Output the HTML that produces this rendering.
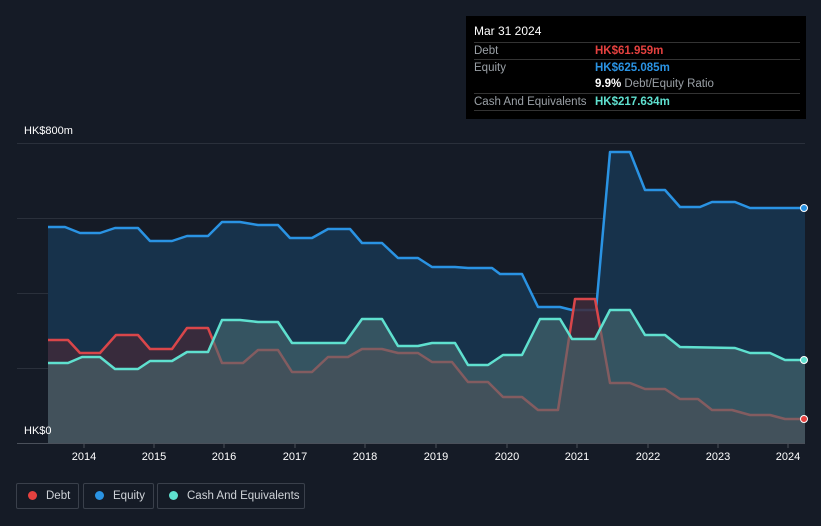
<!DOCTYPE html>
<html><head><meta charset="utf-8"><style>
html,body{margin:0;width:821px;height:526px;overflow:hidden}
body{background:#151b26;font-family:"Liberation Sans",sans-serif;position:relative}
.tt{position:absolute;left:466px;top:16px;width:340px;height:103px;background:#000;color:#fff;font-size:11.5px}
.tt .r{position:absolute;left:8px;right:6px;height:17px;border-top:1px solid #333;line-height:17px}
.tt .l{color:#9aa0a6;position:absolute;left:0}
.tt .v{position:absolute;left:121px;font-weight:bold;white-space:nowrap}
.lg{position:absolute;top:483px;height:26px;border:1px solid #3a404b;border-radius:2px;color:#cfd3d8;font-size:11.5px;line-height:24px;box-sizing:border-box;white-space:nowrap}
.lg i{display:inline-block;width:9px;height:9px;border-radius:50%;margin:0 9px 0 11px;vertical-align:-1px}
.ax{position:absolute;color:#fff;font-size:11px}
</style></head><body>
<div class="tt">
<div style="position:absolute;left:8px;top:8px;font-size:12px">Mar 31 2024</div>
<div class="r" style="top:26px"><span class="l">Debt</span><span class="v" style="color:#e5413f">HK$61.959m</span></div>
<div class="r" style="top:43px"><span class="l">Equity</span><span class="v" style="color:#2a93e3">HK$625.085m</span></div>
<div class="r" style="top:60px;border-top:none"><span class="v" style="color:#fff">9.9% <span style="color:#9aa0a6;font-weight:normal">Debt/Equity Ratio</span></span></div>
<div class="r" style="top:77px"><span class="l">Cash And Equivalents</span><span class="v" style="color:#5fe0cf">HK$217.634m</span></div>
<div class="r" style="top:94px;height:0"></div>
</div>
<div class="ax" style="left:24px;top:125px">HK$800m</div>
<svg width="821" height="526" style="position:absolute;left:0;top:0">
<g stroke="#2a303b" stroke-width="1">
<line x1="17" y1="143.5" x2="805" y2="143.5"/><line x1="17" y1="218.5" x2="805" y2="218.5"/><line x1="17" y1="293.5" x2="805" y2="293.5"/><line x1="17" y1="368.5" x2="805" y2="368.5"/>
</g>
<g stroke-linejoin="round" stroke-width="2.5">
<path d="M48,443 L48,227 L65,227 L80,233 L100,233 L115,228 L138,228 L150,241 L172,241 L187,236 L208,236 L222,222 L240,222 L258,225 L278,225 L290,238 L312,238 L328,229 L350,229 L362,243 L382,243 L398,258 L418,258 L432,267 L455,267 L468,268 L492,268 L500,274 L522,274 L538,307 L560,307 L572,310 L596,310 L610,152 L630,152 L645,190 L665,190 L680,207 L700,207 L712,202 L735,202 L750,208 L805,208 L805,443Z" fill="#17324b" stroke="none"/>
<path d="M48,227 L65,227 L80,233 L100,233 L115,228 L138,228 L150,241 L172,241 L187,236 L208,236 L222,222 L240,222 L258,225 L278,225 L290,238 L312,238 L328,229 L350,229 L362,243 L382,243 L398,258 L418,258 L432,267 L455,267 L468,268 L492,268 L500,274 L522,274 L538,307 L560,307 L572,310 L596,310 L610,152 L630,152 L645,190 L665,190 L680,207 L700,207 L712,202 L735,202 L750,208 L805,208" fill="none" stroke="#2a93e3"/>
<path d="M48,443 L48,340 L68,340 L80,353 L100,353 L116,335 L138,335 L150,349 L172,349 L187,328 L208,328 L222,363 L243,363 L258,350 L278,350 L292,372 L312,372 L328,357 L348,357 L362,349 L382,349 L398,353 L418,353 L432,362 L452,362 L468,382 L488,382 L503,397 L522,397 L538,410 L558,410 L575,299 L595,299 L610,383 L630,383 L645,389 L665,389 L680,399 L698,399 L712,410 L732,410 L750,415 L770,415 L785,419 L805,419 L805,443Z" fill="#3e2a3a" fill-opacity="0.85" stroke="none"/>
<path d="M48,340 L68,340 L80,353 L100,353 L116,335 L138,335 L150,349 L172,349 L187,328 L208,328 L222,363 L243,363 L258,350 L278,350 L292,372 L312,372 L328,357 L348,357 L362,349 L382,349 L398,353 L418,353 L432,362 L452,362 L468,382 L488,382 L503,397 L522,397 L538,410 L558,410 L575,299 L595,299 L610,383 L630,383 L645,389 L665,389 L680,399 L698,399 L712,410 L732,410 L750,415 L770,415 L785,419 L805,419" fill="none" stroke="#d9464a"/>
<path d="M48,443 L48,363 L68,363 L82,357 L100,357 L115,369 L138,369 L150,361 L172,361 L187,352 L208,352 L222,320 L240,320 L258,322 L278,322 L292,343 L345,343 L362,319 L382,319 L398,346 L418,346 L432,343 L455,343 L468,365 L488,365 L503,355 L522,355 L540,319 L560,319 L572,339 L595,339 L610,310 L630,310 L645,335 L665,335 L680,347 L735,348 L750,353 L770,353 L785,360 L805,360 L805,443Z" fill="#4a6a70" fill-opacity="0.6" stroke="none"/>
<path d="M48,363 L68,363 L82,357 L100,357 L115,369 L138,369 L150,361 L172,361 L187,352 L208,352 L222,320 L240,320 L258,322 L278,322 L292,343 L345,343 L362,319 L382,319 L398,346 L418,346 L432,343 L455,343 L468,365 L488,365 L503,355 L522,355 L540,319 L560,319 L572,339 L595,339 L610,310 L630,310 L645,335 L665,335 L680,347 L735,348 L750,353 L770,353 L785,360 L805,360" fill="none" stroke="#5fe0cf"/>
</g>
<line x1="17" y1="443.5" x2="805" y2="443.5" stroke="#4a505a"/>
<g stroke="#4a505a"><line x1="84" y1="444" x2="84" y2="448"/><line x1="154" y1="444" x2="154" y2="448"/><line x1="224" y1="444" x2="224" y2="448"/><line x1="295" y1="444" x2="295" y2="448"/><line x1="365" y1="444" x2="365" y2="448"/><line x1="436" y1="444" x2="436" y2="448"/><line x1="507" y1="444" x2="507" y2="448"/><line x1="577" y1="444" x2="577" y2="448"/><line x1="648" y1="444" x2="648" y2="448"/><line x1="718" y1="444" x2="718" y2="448"/><line x1="788" y1="444" x2="788" y2="448"/></g>
<circle cx="804" cy="208" r="3.5" fill="#2a93e3" stroke="#fff" stroke-width="1"/>
<circle cx="804" cy="360" r="3.5" fill="#5fe0cf" stroke="#fff" stroke-width="1"/>
<circle cx="804" cy="419" r="3.5" fill="#e5413f" stroke="#fff" stroke-width="1"/>
<g fill="#fff" font-size="11" font-family="Liberation Sans" text-anchor="middle">
<text x="84" y="460">2014</text><text x="154" y="460">2015</text><text x="224" y="460">2016</text><text x="295" y="460">2017</text><text x="365" y="460">2018</text><text x="436" y="460">2019</text><text x="507" y="460">2020</text><text x="577" y="460">2021</text><text x="648" y="460">2022</text><text x="718" y="460">2023</text><text x="788" y="460">2024</text>
</g>
</svg>
<div class="ax" style="left:24px;top:425px">HK$0</div>
<div class="lg" style="left:16px;width:63px"><i style="background:#e5413f"></i>Debt</div>
<div class="lg" style="left:83px;width:71px"><i style="background:#2a93e3"></i>Equity</div>
<div class="lg" style="left:157px;width:148px"><i style="background:#5fe0cf"></i>Cash And Equivalents</div>
</body></html>
